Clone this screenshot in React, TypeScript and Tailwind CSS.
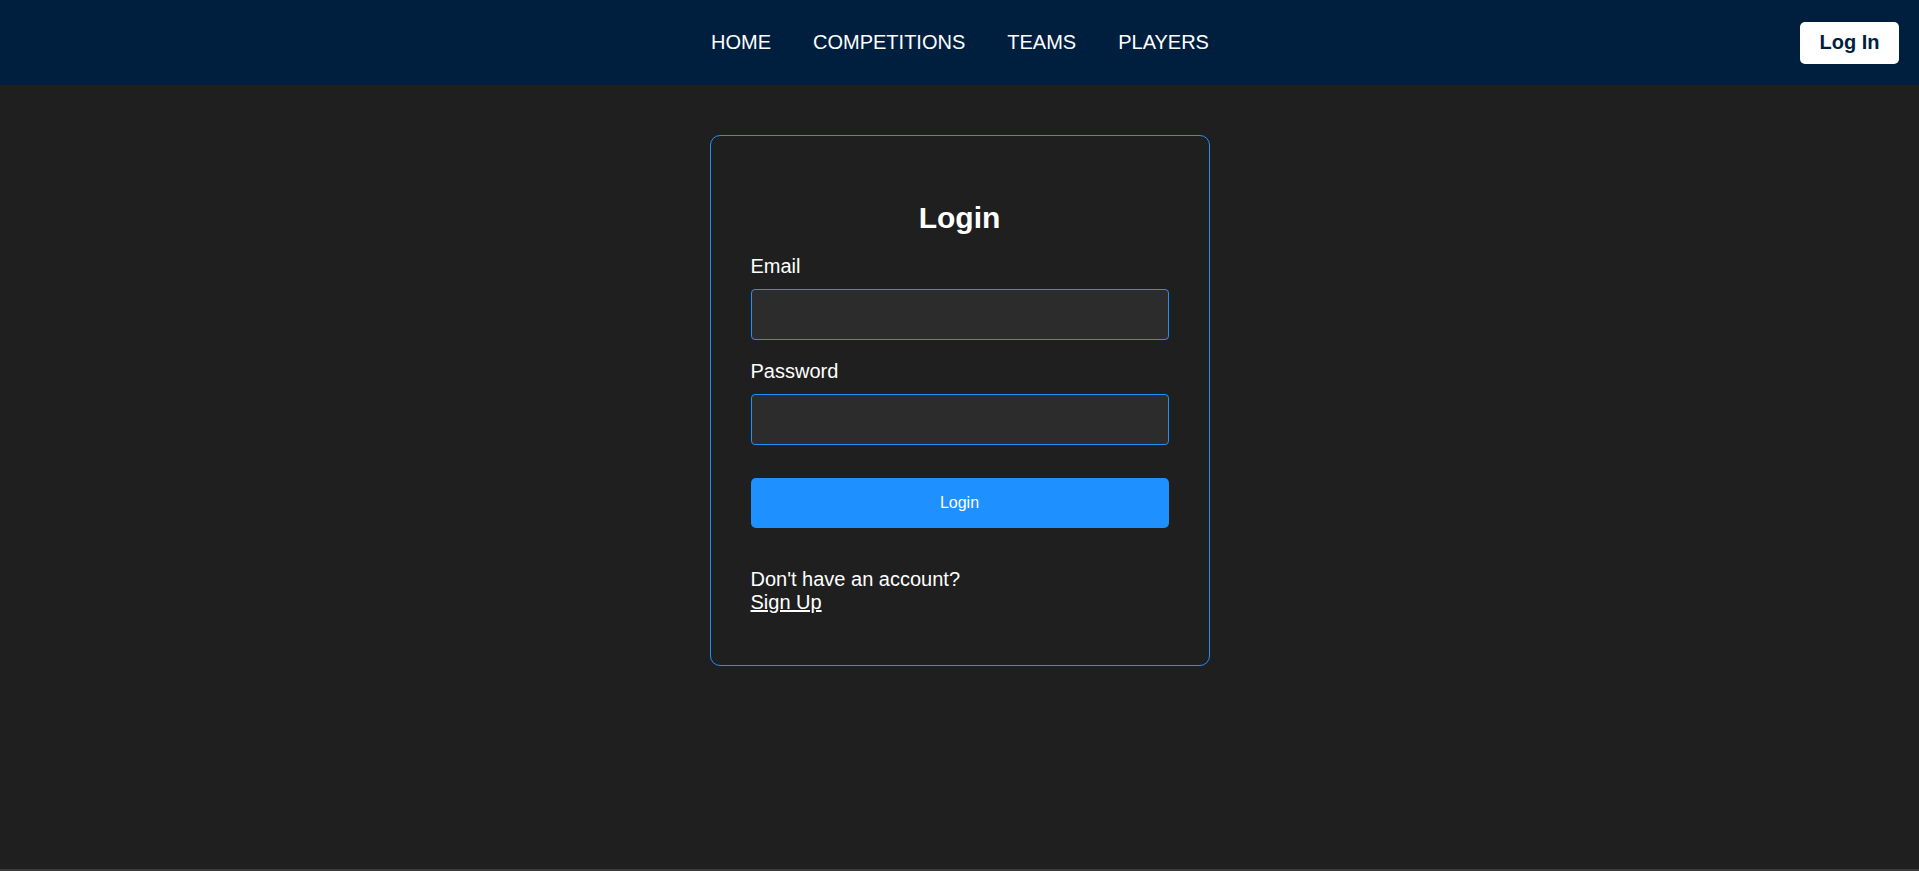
const navLinks = ['HOME', 'COMPETITIONS', 'TEAMS', 'PLAYERS'];

export default function App() {
  return (
    <div className="h-screen flex flex-col bg-[#1f1f1f] text-white font-['Liberation_Sans',Arial,sans-serif] overflow-hidden">
      <header className="h-[85px] shrink-0 bg-[#001f3f] grid grid-cols-[1fr_auto_1fr] items-center">
        <div></div>
        <nav className="flex items-center gap-[42px] pl-[1px]">
          {navLinks.map(link => (
            <a key={link} href="#" className="text-[20px] leading-[23px] text-white">
              {link}
            </a>
          ))}
        </nav>
        <div className="flex justify-end pr-[20px]">
          <button className="h-[42px] w-[99px] bg-white text-[#001f3f] font-bold text-[20px] leading-[23px] rounded-[5px]">
            Log In
          </button>
        </div>
      </header>

      <main className="flex-1">
        <div className="w-[500px] mx-auto mt-[50px] border border-[#1e90ff] rounded-[10px] p-[40px]">
          <h2 className="mt-[25px] text-[30px] leading-[34px] font-bold text-center">Login</h2>
          <form>
            <label className="block mt-[20px] text-[20px] leading-[23px]">Email</label>
            <input
              type="email"
              className="block w-full mt-[11px] h-[51px] bg-[#2c2c2c] border border-[#1e90ff] rounded-[4px] px-[15px] text-[16px] text-white outline-none"
            />
            <label className="block mt-[20px] text-[20px] leading-[23px]">Password</label>
            <input
              type="password"
              className="block w-full mt-[11px] h-[51px] bg-[#2c2c2c] border border-[#1e90ff] rounded-[4px] px-[15px] text-[16px] text-white outline-none"
            />
            <button
              type="button"
              className="block w-full mt-[33px] h-[50px] bg-[#1e90ff] text-white text-[16px] rounded-[5px]"
            >
              Login
            </button>
          </form>
          <p className="mt-[40px] mb-[11px] text-[20px] leading-[23px]">
            Don't have an account?
            <br />
            <a href="#" className="underline text-white">Sign Up</a>
          </p>
        </div>
      </main>

      <footer className="h-[2px] shrink-0 bg-[#3c3c3c]"></footer>
    </div>
  );
}
